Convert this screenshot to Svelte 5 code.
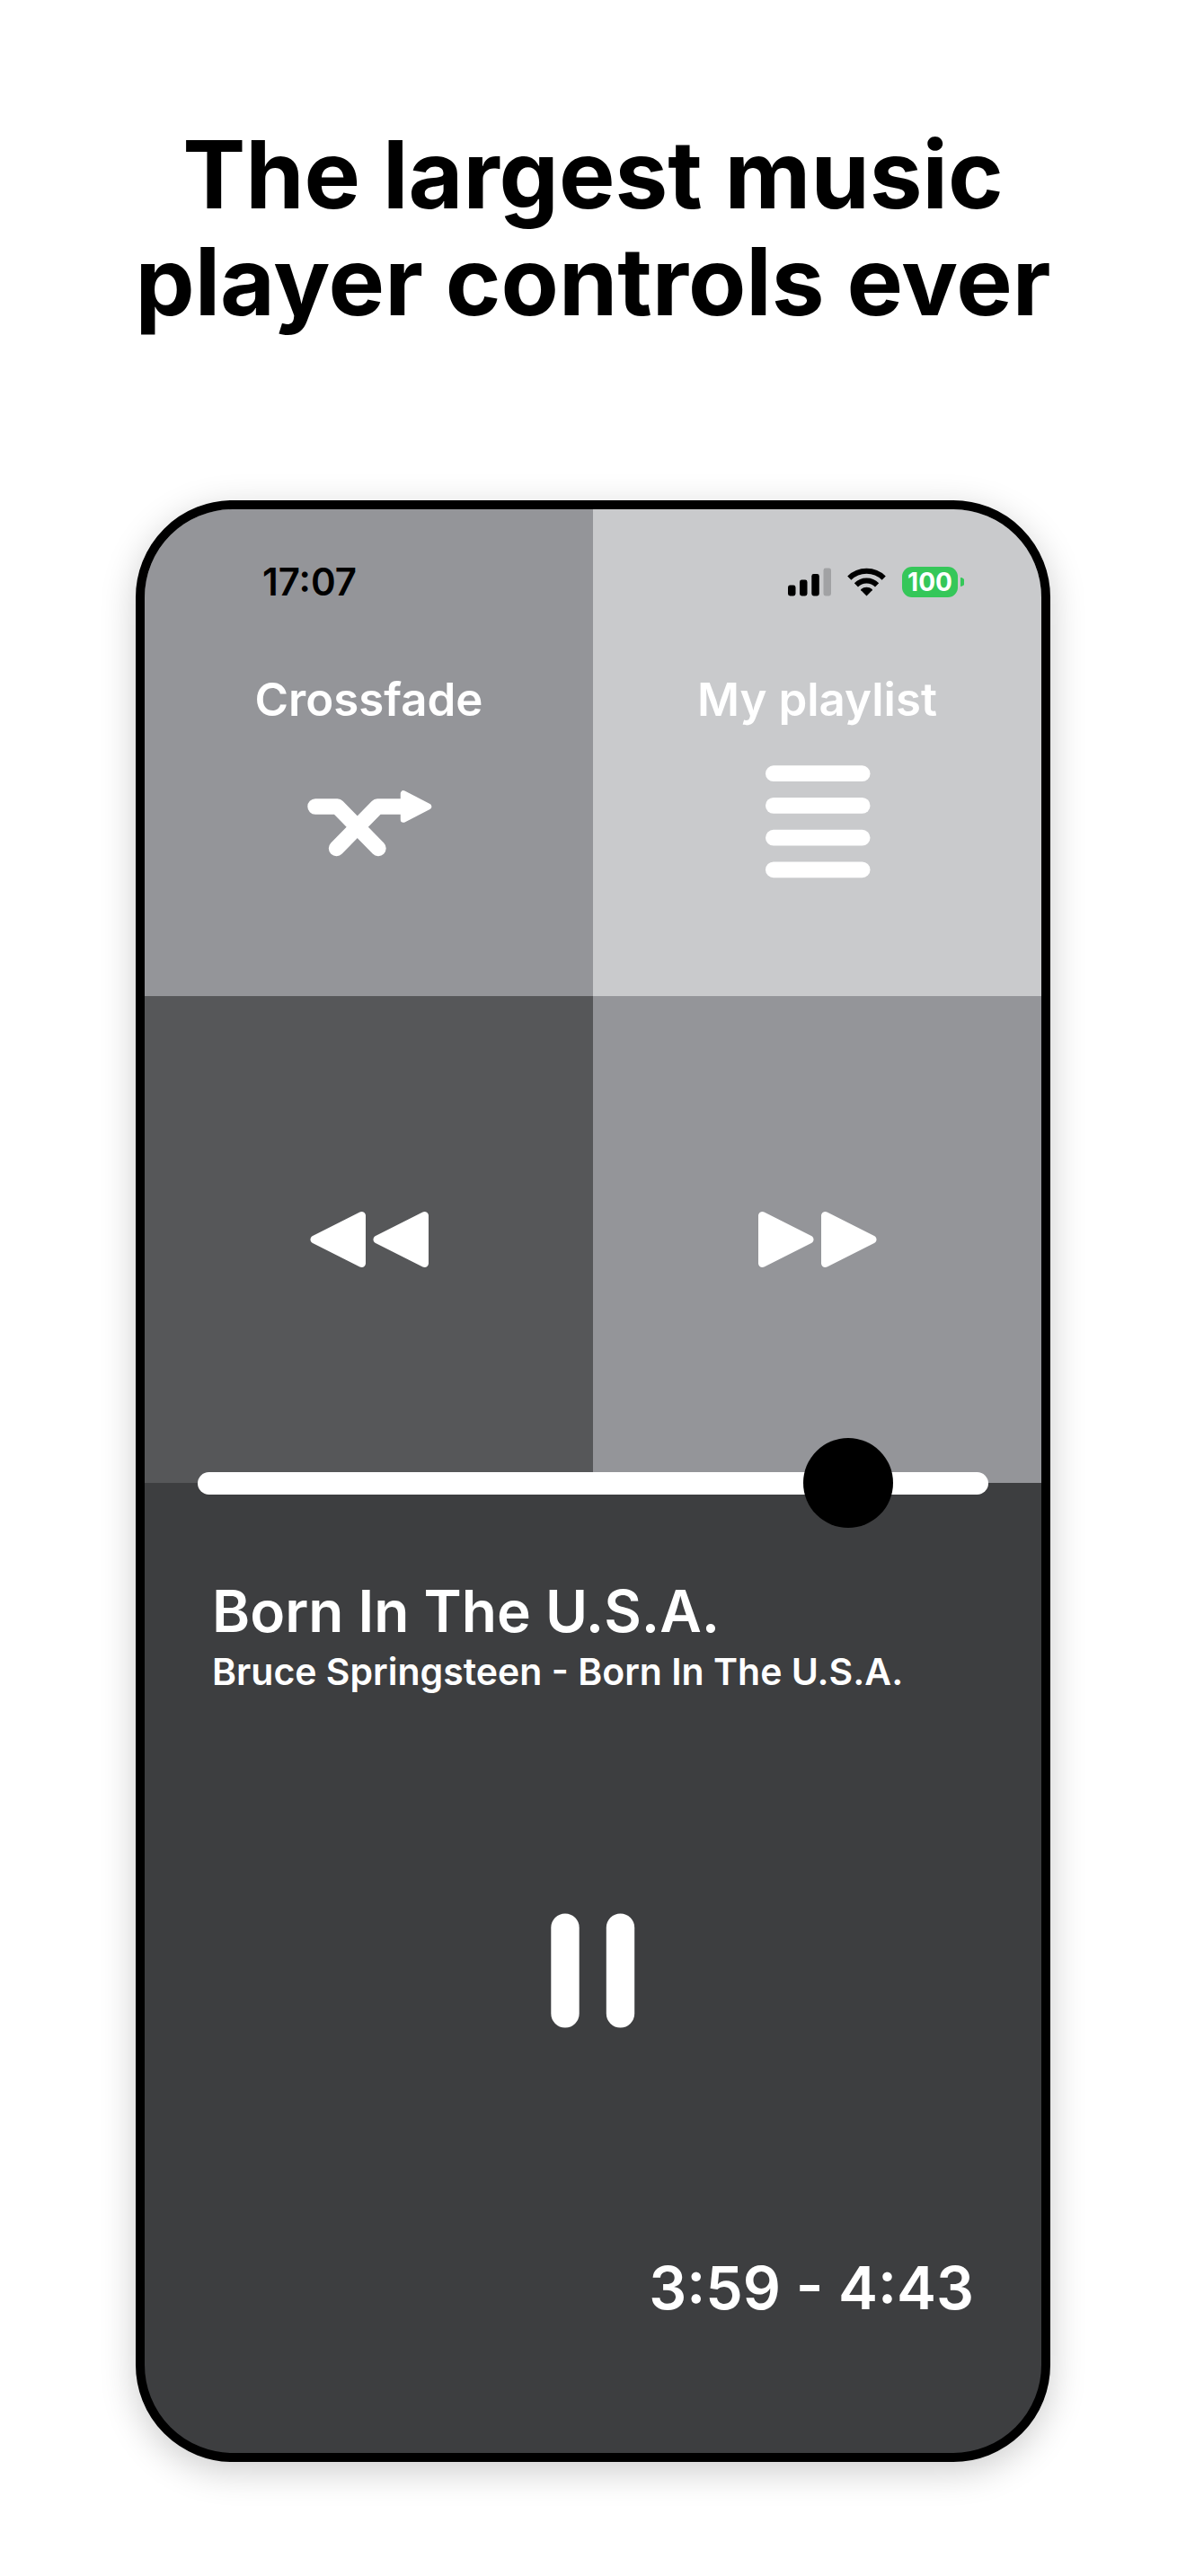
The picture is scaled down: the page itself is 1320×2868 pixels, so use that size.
<script>
  // Playback state shown on the screen
  let position = 864;
  let playing = true;

  const track = {
    title: 'Born In The U.S.A.',
    artist: 'Bruce Springsteen',
    album: 'Born In The U.S.A.',
    elapsed: '3:59',
    duration: '4:43'
  };

  function togglePlay() {
    playing = !playing;
  }
</script>

<main class="page">
  <h1>The largest music player controls ever</h1>

  <div class="phone">
    <header class="status-bar">
      <time class="clock">17:07</time>
      <div class="status-icons">
        <svg class="signal" width="48" height="32" viewBox="0 0 48 32" aria-hidden="true">
          <rect x="0" y="19.5" width="8.5" height="12" rx="2.4" />
          <rect x="13" y="13.5" width="8.5" height="18" rx="2.4" />
          <rect x="26.3" y="7" width="8.5" height="24.5" rx="2.4" />
          <rect x="39.5" y="0.5" width="8.5" height="31" rx="2.4" fill="#a1a2a4" />
        </svg>
        <svg class="wifi" width="43" height="32" viewBox="0 0 43 32" aria-hidden="true">
          <g fill="none" stroke="#000" stroke-width="6">
            <path d="M2.3 11.6a27.4 27.4 0 0 1 38.4 0" />
            <path d="M9.9 19.3a16.6 16.6 0 0 1 23.2 0" />
          </g>
          <path d="M21.5 31.4l-6.2-6.2a1 1 0 0 1 0-1.2a9.6 9.6 0 0 1 12.4 0a1 1 0 0 1 0 1.2z" />
        </svg>
        <div class="battery">
          <span class="level">100</span>
          <svg width="4" height="10" viewBox="0 0 4 10" aria-hidden="true">
            <path d="M0 0a5 5 0 0 1 0 10z" fill="#35c759" />
          </svg>
        </div>
      </div>
    </header>

    <div class="tiles">
      <button type="button" class="tile labelled mid">
        <span class="label">Crossfade</span>
        <svg width="140" height="126" viewBox="0 0 140 126" aria-hidden="true">
          <g fill="none" stroke="#fff" stroke-width="17.4" stroke-linecap="round" stroke-linejoin="round">
            <path d="M10 46h24.5l45.5 46.5" />
            <path d="M33.5 92.5l45.5-46.5h28" />
          </g>
          <path
            d="M108 31.5v29l28-14.5z"
            fill="#fff"
            stroke="#fff"
            stroke-width="6.5"
            stroke-linejoin="round"
          />
        </svg>
      </button>

      <button type="button" class="tile labelled light">
        <span class="label">My playlist</span>
        <svg width="140" height="126" viewBox="0 0 140 126" fill="#fff" aria-hidden="true">
          {#each [0.3, 36, 71.8, 107.4] as y}
            <rect x="12" {y} width="116.5" height="17.8" rx="8.9" />
          {/each}
        </svg>
      </button>

      <button type="button" class="tile dark" aria-label="Previous">
        <svg width="132" height="64" viewBox="0 0 132 64" aria-hidden="true">
          <g fill="#fff" stroke="#fff" stroke-width="9" stroke-linejoin="round">
            <path d="M57.5 5.5v53L5 32z" />
            <path d="M127.5 5.5v53L75 32z" />
          </g>
        </svg>
      </button>

      <button type="button" class="tile mid" aria-label="Next">
        <svg width="132" height="64" viewBox="0 0 132 64" aria-hidden="true">
          <g fill="#fff" stroke="#fff" stroke-width="9" stroke-linejoin="round">
            <path d="M4.5 5.5v53L57 32z" />
            <path d="M74.5 5.5v53L127 32z" />
          </g>
        </svg>
      </button>
    </div>

    <section class="now-playing">
      <input
        class="seek"
        type="range"
        min="0"
        max="1000"
        bind:value={position}
        aria-label="Playback position"
      />

      <div class="track">
        <h2>{track.title}</h2>
        <p>{track.artist} - {track.album}</p>
      </div>

      <button type="button" class="play" aria-label={playing ? 'Pause' : 'Play'} on:click={togglePlay}>
        <svg width="94" height="128" viewBox="0 0 94 128" fill="#fff" aria-hidden="true">
          {#if playing}
            <rect x="0.3" y="0.5" width="31.4" height="127" rx="15.7" />
            <rect x="61.8" y="0.5" width="31.4" height="127" rx="15.7" />
          {:else}
            <path d="M6 6v116l82-58z" />
          {/if}
        </svg>
      </button>

      <p class="timing">{track.elapsed} - {track.duration}</p>
    </section>
  </div>
</main>

<style>
  :global(body) {
    margin: 0;
    background: #fff;
  }

  .page {
    display: flex;
    flex-direction: column;
    align-items: center;
    padding: 134px 48px 126px;
    font-family: Inter, 'Liberation Sans', sans-serif;
  }

  h1 {
    max-width: 1100px;
    margin: 0 0 185px;
    color: #000;
    font-size: 105px;
    font-weight: 700;
    line-height: 119px;
    text-align: center;
    text-wrap: balance;
  }

  /* Device frame */
  .phone {
    position: relative;
    box-sizing: border-box;
    width: 100%;
    max-width: 1018px;
    overflow: hidden;
    border: 10px solid #000;
    border-radius: 108px;
    background: #3d3e40;
    box-shadow: 0 10px 40px rgba(0, 0, 0, 0.2);
  }

  /* Status bar lies over the two upper tiles */
  .status-bar {
    position: absolute;
    top: 56px;
    left: 0;
    right: 0;
    z-index: 1;
    display: flex;
    align-items: center;
    justify-content: space-between;
    padding: 0 86px 0 131px;
    pointer-events: none;
  }

  .clock {
    font-size: 42px;
    font-weight: 600;
    line-height: 50px;
  }

  .status-icons {
    display: flex;
    align-items: center;
    gap: 18px;
  }

  .battery {
    display: flex;
    align-items: center;
    gap: 3px;
  }

  .level {
    width: 62px;
    border-radius: 11px;
    background: #35c759;
    color: #fff;
    font-size: 28px;
    font-weight: 700;
    line-height: 34px;
    text-align: center;
  }

  svg {
    display: block;
  }

  button {
    margin: 0;
    padding: 0;
    border: 0;
    background: none;
    color: inherit;
    font: inherit;
    cursor: pointer;
  }

  /* Control tiles */
  .tiles {
    display: grid;
    grid-template-columns: 1fr 1fr;
  }

  .tile {
    display: flex;
    flex-direction: column;
    align-items: center;
    justify-content: center;
    min-height: 542px;
    color: #fff;
  }

  .labelled {
    justify-content: flex-start;
    gap: 41px;
    padding-top: 180px;
  }

  .label {
    font-size: 51px;
    font-weight: 600;
    line-height: 64px;
  }

  .mid {
    background: #949599;
  }

  .light {
    background: #c9cacc;
  }

  .dark {
    background: #565759;
  }

  /* Now playing panel */
  .now-playing {
    display: flex;
    flex-direction: column;
    padding: 0 59px 142px;
    color: #fff;
  }

  .seek {
    position: relative;
    width: 100%;
    height: 100px;
    margin: -50px 0 0;
    background: transparent;
    appearance: none;
    cursor: pointer;
  }

  .seek::-webkit-slider-runnable-track {
    height: 25px;
    border-radius: 13px;
    background: #fff;
  }

  .seek::-webkit-slider-thumb {
    width: 100px;
    height: 100px;
    margin-top: -38px;
    border-radius: 50%;
    background: #000;
    appearance: none;
  }

  .track {
    padding: 51px 16px 0;
  }

  h2,
  p {
    margin: 0;
    font-weight: 600;
  }

  h2 {
    font-size: 64px;
    line-height: 84px;
  }

  .track p {
    font-size: 41px;
    line-height: 50px;
  }

  .play {
    align-self: center;
    margin-top: 244px;
  }

  .timing {
    margin-top: 247px;
    padding: 0 16px;
    font-size: 66px;
    line-height: 84px;
    text-align: right;
  }
</style>
